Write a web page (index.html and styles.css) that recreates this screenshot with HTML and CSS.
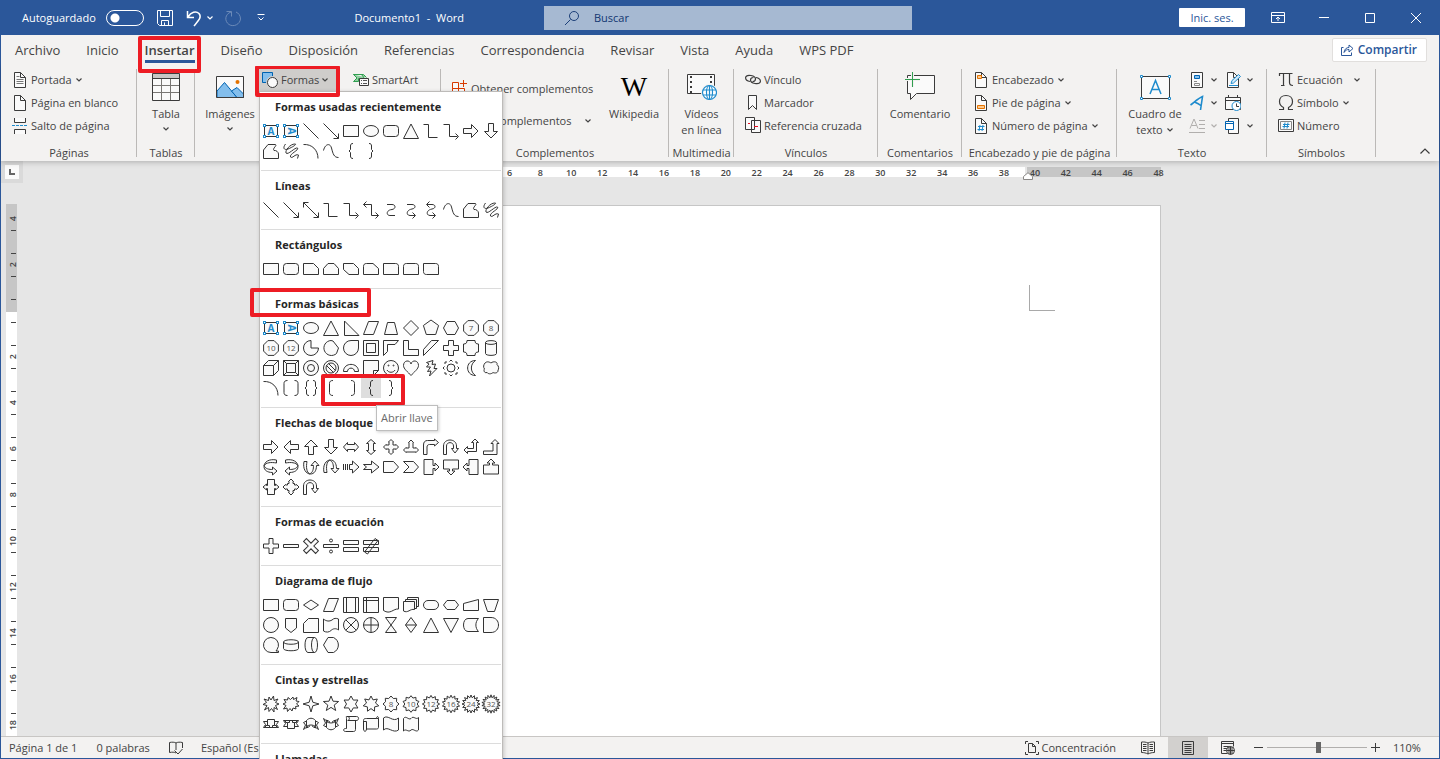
FILE: index.html
```html
<!DOCTYPE html>
<html lang="es">
<head>
<meta charset="utf-8">
<title>Documento1 - Word</title>
<meta name="viewport" content="width=device-width, initial-scale=1">
<link rel="stylesheet" href="styles.css">
</head>
<body>
<svg class="defs" aria-hidden="true">
  <symbol id="chev" viewBox="0 0 8 8"><path d="M1.500 2.500L4 5L6.500 2.500" fill="none" stroke="currentColor" stroke-width="1.200"/></symbol>
  <symbol id="page" viewBox="0 0 16 18"><path d="M2.500 1.500h6l5 5v10h-11z" fill="#fafafa" stroke="#3b3b3b"/><path d="M8.500 1.500v5h5" fill="none" stroke="#3b3b3b"/></symbol>
</svg>
<div class="app">
  <header class="titlebar">
    <div class="title-left">
      <label class="autosave">Autoguardado <input type="checkbox" class="switch"></label>
      <button class="tb save" aria-label="Guardar"><svg width="18" height="18" viewBox="0 0 18 18"><path d="M1.500 1.500h15v15h-13l-2-2zM4.500 1.500v6h9v-6M5.500 16.500v-5h7v5M8.500 16.500v-3" /></svg></button>
      <button class="tb undo" aria-label="Deshacer"><svg width="16" height="18" viewBox="0 0 16 18"><path d="M1.500 2v6.500h6.500M2 8C5 3 10 1.500 13 4.500C16 8 13 11 8 17"/></svg></button>
      <button class="tb undo-more" aria-label="Más opciones"><svg width="8" height="8"><use href="#chev"/></svg></button>
      <button class="tb redo" aria-label="Rehacer" disabled><svg width="18" height="18" viewBox="0 0 18 18"><path d="M2.500 2.500H7.500V7.500M7 3C1 5 0 12 5 15.500C10 18.500 16 15 16.500 10C16.500 6.500 14.500 4 12 3"/></svg></button>
      <button class="tb custom" aria-label="Personalizar"><svg width="10" height="10" viewBox="0 0 10 10"><path d="M1.500 1.500h7M2.500 4.500L5 7L7.500 4.500"/></svg></button>
      <span class="doc-title">Documento1&nbsp; -&nbsp; Word</span>
    </div>
    <label class="search">
      <svg width="16" height="16" viewBox="0 0 16 16" aria-hidden="true"><circle cx="10" cy="6" r="4.500"/><path d="M6.500 9.500L1 15"/></svg>
      <input type="text" placeholder="Buscar" aria-label="Buscar">
    </label>
    <div class="title-right">
      <button class="signin">Inic. ses.</button>
      <button class="win" aria-label="Opciones de cinta"><svg width="14" height="12" viewBox="0 0 14 12"><path d="M.5 .5h13v10h-13zM.5 3.500h13M7 9V5M5 7l2-2 2 2"/></svg></button>
      <button class="win" aria-label="Minimizar"><svg width="12" height="12" viewBox="0 0 12 12"><path d="M1 5.500h10"/></svg></button>
      <button class="win" aria-label="Maximizar"><svg width="12" height="12" viewBox="0 0 12 12"><path d="M1.500 1.500h9v9h-9z"/></svg></button>
      <button class="win" aria-label="Cerrar"><svg width="12" height="12" viewBox="0 0 12 12"><path d="M1 1l10 10M11 1L1 11"/></svg></button>
    </div>
  </header>

  <nav class="tabs">
    <a href="#">Archivo</a>
    <a href="#">Inicio</a>
    <a href="#" class="active" aria-current="page">Insertar<span class="mark mark-tab"></span></a>
    <a href="#">Diseño</a>
    <a href="#">Disposición</a>
    <a href="#">Referencias</a>
    <a href="#">Correspondencia</a>
    <a href="#">Revisar</a>
    <a href="#">Vista</a>
    <a href="#">Ayuda</a>
    <a href="#">WPS PDF</a>
    <button class="share"><svg width="14" height="14" viewBox="0 0 14 14" aria-hidden="true"><path d="M3.500 4.500h-2v8h10v-3M4 9.500C4.500 6 6.500 4.500 9 4.500V2L13 5.500L9 9V6.500C7 6.500 5.500 7 4 9.500z"/></svg>Compartir</button>
  </nav>

  <div class="ribbon">
    <section class="group g-pages">
      <div class="body">
        <div class="stack">
          <button class="cmd"><svg width="16" height="18" viewBox="0 0 16 18"><use href="#page"/><path d="M4.500 5.500h3M4.500 8.500h7M4.500 10.500h7M4.500 12.500h7" stroke="#777"/></svg>Portada<svg class="chev"><use href="#chev"/></svg></button>
          <button class="cmd"><svg width="16" height="18"><use href="#page"/></svg>Página en blanco</button>
          <button class="cmd"><svg width="16" height="18" viewBox="0 0 16 18"><path d="M2.500 1v4.500h11V1M2.500 17v-4.500h11V17" fill="#fafafa" stroke="#3b3b3b"/><path d="M0 8.500h16" stroke="#1e8bcd" stroke-dasharray="3 1"/></svg>Salto de página</button>
        </div>
      </div>
      <h2>Páginas</h2>
    </section>

    <section class="group g-tables">
      <div class="body">
        <button class="big"><span class="ico"><svg width="28" height="30" viewBox="0 0 28 30"><path d="M.5 1.500h27v27H.5z" fill="#fafafa" stroke="#3b3b3b"/><path d="M1 2h26v4H1z" fill="#c8c6c4"/><path d="M.5 6.500h27" stroke="#3b3b3b"/><path d="M1 13.500h26M1 20.500h26M9.500 7v21M18.500 7v21" stroke="#797774"/></svg></span>Tabla<svg class="chev"><use href="#chev"/></svg></button>
      </div>
      <h2>Tablas</h2>
    </section>

    <section class="group g-illus">
      <div class="body">
        <button class="big"><span class="ico"><svg width="28" height="22" viewBox="0 0 28 22"><path d="M.5 .5h27v21H.5z" fill="#fafafa"/><path d="M1 15L8.500 6.500L21 21.500H1z" fill="#83beec" stroke="#0063b1"/><path d="M15.500 15L21 11.500L27.500 18v3.500H21z" fill="#83beec" stroke="#0063b1"/><circle cx="21.500" cy="6" r="2" fill="#e57300"/><path d="M.5 .5h27v21H.5z" fill="none" stroke="#3b3b3b"/></svg></span>Imágenes<svg class="chev"><use href="#chev"/></svg></button>
        <div class="shapes-wrap">
          <button class="cmd shapes-btn" aria-expanded="true"><svg width="18" height="18" viewBox="0 0 18 18"><path d="M1.500 1.500h10v10h-10z" fill="#83beec" stroke="#0063b1"/><circle cx="11.500" cy="11.500" r="6.500" fill="#cfcdcb"/><circle cx="11.500" cy="11.500" r="5" fill="#fafafa" stroke="#3b3b3b"/></svg>Formas<svg class="chev"><use href="#chev"/></svg></button>
          <span class="mark mark-shapes"></span>
          <div class="menu">
            <section><h3>Formas usadas recientemente</h3><div class="gallery" data-shapes="textbox vtextbox line arrow rect oval round triangle elbow elbowArrow right down freeform scribble arc curve lbrace rbrace"></div></section>
            <section><h3>Líneas</h3><div class="gallery" data-shapes="line arrow arrow2 elbow elbowArrow elbowArrow2 curved curvedArrow curvedArrow2 curve freeform scribble"></div></section>
            <section><h3>Rectángulos</h3><div class="gallery" data-shapes="rect round snip1 snip2 snipDiag snipRound round1 round2 roundDiag"></div></section>
            <section><h3>Formas básicas<span class="mark mark-basic"></span></h3><div class="gallery" data-shapes="textbox vtextbox oval triangle rtriangle parallel trapezoid diamond pentagon hexagon n7 n8 n10 n12 pie chord tear frame halfFrame lshape stripe plus plaque can cube bevel donut no blockArc fold smile heart bolt sun moon cloud arc brackets braces lbracket rbracket lbrace:on rbrace"></div><span class="mark mark-braces"></span></section>
            <section><h3>Flechas de bloque</h3><div class="gallery" data-shapes="right left up down leftright updown quad tri bent uturn leftup bentup curveR curveL curveU curveD striped notched penta chevron callR callD callL callU callLR callQ circular"></div></section>
            <section><h3>Formas de ecuación</h3><div class="gallery" data-shapes="mplus minus times divide equal notequal"></div></section>
            <section><h3>Diagrama de flujo</h3><div class="gallery" data-shapes="rect round fdecision parallel predef internal document multidoc terminator prep manual manualop circle offpage card tape sumj orj collate sort triangle merge stored delay seq disk direct display"></div></section>
            <section><h3>Cintas y estrellas</h3><div class="gallery" data-shapes="exp1 exp2 s4 s5 s6 s7 s8 s10 s12 s16 s24 s32 ribbonU ribbonD ribbonCU ribbonCD scrollV scrollH wave dwave"></div></section>
            <section><h3>Llamadas</h3></section>
            <span class="tip" role="tooltip">Abrir llave</span>
          </div>
        </div>
        <button class="cmd smartart"><svg width="16" height="18" viewBox="0 0 16 18"><path d="M.5 3.500h10l3 3M.5 3.500l3.500 3.500-3.500 3.500h5v-3h6l-3-4z" fill="#8fd1a0" stroke="#2f9e4f"/><path d="M6.500 7.500h9v7h-9z" fill="#fafafa" stroke="#3b3b3b"/><path d="M8 9.500h1M8 12.500h1M10 9.500h4M10 12.500h4" stroke="#555"/></svg>SmartArt</button>
      </div>
    </section>

    <section class="group g-addins">
      <div class="body">
        <div class="addins">
          <button class="cmd"><svg width="16" height="18" viewBox="0 0 16 18"><path d="M.5 2.500h6v6h-6zM.5 8.500h6v6h-6zM6.500 8.500h6v6h-6z" fill="#fafafa" stroke="#d83b01"/><path d="M11.500 0v7M8 3.500h7" stroke="#d83b01"/></svg>Obtener complementos</button>
          <button class="cmd mine"><svg width="16" height="18" viewBox="0 0 16 18"><path d="M2.500 5.500l6-3 6 3v7l-6 3-6-3z" fill="#fafafa" stroke="#d83b01"/></svg>Mis complementos<svg class="chev wide"><use href="#chev"/></svg></button>
        </div>
        <button class="big"><span class="ico wiki">W</span>Wikipedia</button>
      </div>
      <h2>Complementos</h2>
    </section>

    <section class="group g-media">
      <div class="body">
        <button class="big"><span class="ico"><svg width="30" height="28" viewBox="0 0 30 28"><path d="M.5 1.500h27v19H.5z" fill="#fafafa" stroke="#3b3b3b"/><path d="M4 3v17M24 3v8" stroke="#3b3b3b" stroke-width="2" stroke-dasharray="2 3"/><circle cx="22.500" cy="19.500" r="8.500" fill="#f3f2f1"/><g fill="#fff" stroke="#1e8bcd" stroke-width="1.200"><circle cx="22.500" cy="19.500" r="7"/><ellipse cx="22.500" cy="19.500" rx="3" ry="7"/><path d="M16 17h13M16 22h13M22.500 12.500v14" fill="none"/></g></svg></span>Vídeos<br>en línea</button>
      </div>
      <h2>Multimedia</h2>
    </section>

    <section class="group g-links">
      <div class="body">
        <div class="stack">
          <button class="cmd"><svg width="16" height="18" viewBox="0 0 16 18"><g fill="none" stroke="#3b3b3b" stroke-width="1.200"><path d="M5 10.500C2 10 .5 8.500 .6 6.500C1 4.500 3 4 6 4.500C9 5 10.500 6.500 10.500 8C10.500 10 9 10.500 7.500 10.500"/><path d="M11 6.500C14 7 15.500 8.500 15.400 10.500C15 12.500 13 13 10 12.500C7 12 5.500 10.500 5.500 9C5.500 7 7 6.500 8.500 6.500"/></g></svg>Vínculo</button>
          <button class="cmd"><svg width="16" height="18" viewBox="0 0 16 18"><path d="M3.500 1.500h8v14l-4-4-4 4z" fill="#fafafa" stroke="#3b3b3b"/></svg>Marcador</button>
          <button class="cmd"><svg width="16" height="18" viewBox="0 0 16 18"><path d="M.5 .5h9v12h-9zM6.500 3.500h9v12h-9z" fill="#fafafa" stroke="#3b3b3b"/><path d="M3 6.500h2M9 9.500h4" stroke="#e81123"/></svg>Referencia cruzada</button>
        </div>
      </div>
      <h2>Vínculos</h2>
    </section>

    <section class="group g-comments">
      <div class="body">
        <button class="big"><span class="ico"><svg width="32" height="32" viewBox="0 0 32 32"><path d="M3.500 4.500h27v18h-18l-6 6v-6h-3z" fill="#fafafa" stroke="#3b3b3b"/><path d="M8.500 1v15M1 8.500h15" stroke="#f3f2f1" stroke-width="3"/><path d="M8.500 1v15M1 8.500h15" stroke="#2f9e4f"/></svg></span>Comentario</button>
      </div>
      <h2>Comentarios</h2>
    </section>

    <section class="group g-header">
      <div class="body">
        <div class="stack">
          <button class="cmd"><svg width="16" height="18" viewBox="0 0 16 18"><use href="#page"/><path d="M4.500 4.500h4v3h-4z" fill="#fcc98c" stroke="#e57300"/></svg>Encabezado<svg class="chev"><use href="#chev"/></svg></button>
          <button class="cmd"><svg width="16" height="18" viewBox="0 0 16 18"><use href="#page"/><path d="M4.500 11.500h7v3h-7z" fill="#fcc98c" stroke="#e57300"/></svg>Pie de página<svg class="chev"><use href="#chev"/></svg></button>
          <button class="cmd"><svg width="16" height="18" viewBox="0 0 16 18"><use href="#page"/><path d="M7 8l-1 6M10 8l-1 6M5 9.500h6.500M4.500 12.500h6.500" stroke="#1e8bcd"/></svg>Número de página<svg class="chev"><use href="#chev"/></svg></button>
        </div>
      </div>
      <h2>Encabezado y pie de página</h2>
    </section>

    <section class="group g-text">
      <div class="body">
        <button class="big"><span class="ico"><svg width="32" height="28" viewBox="0 0 32 28"><path d="M2.500 3.500h28v22h-28z" fill="#fafafa" stroke="#3b3b3b"/><path d="M1.500 2.500h2v2h-2zM29.500 2.500h2v2h-2zM1.500 24.500h2v2h-2zM29.500 24.500h2v2h-2z" fill="#fff" stroke="#1e8bcd"/><path d="M11 21L16.500 7.500L22 21M13 16.500h7" fill="none" stroke="#1e8bcd" stroke-width="1.500"/></svg></span>Cuadro de<span>texto<svg class="chev inline"><use href="#chev"/></svg></span></button>
        <div class="mini-grid">
          <button class="mini" aria-label="Elementos rápidos"><svg width="16" height="18" viewBox="0 0 16 18"><path d="M2.500 1.500h11v15h-11z" fill="#fafafa" stroke="#3b3b3b"/><path d="M5.500 4.500h5v3h-5z" fill="#83beec" stroke="#0063b1"/><path d="M5 10.500h3M5.500 12.500h5v2h-5z" fill="none" stroke="#888"/></svg><svg class="chev"><use href="#chev"/></svg></button>
          <button class="mini" aria-label="Línea de firma"><svg width="16" height="18" viewBox="0 0 16 18"><use href="#page"/><path d="M4 14.500h9" stroke="#1e8bcd"/><path d="M6 12.500l1-3 6.500-6 2 2-7 6.500z" fill="#d3e9f8" stroke="#1e8bcd"/></svg><svg class="chev"><use href="#chev"/></svg></button>
          <button class="mini" aria-label="WordArt"><svg width="16" height="18" viewBox="0 0 16 18"><path d="M1.500 11C5 8.500 9 4.500 13.500 2.500L11.500 16M5.500 8C8 9 10 10 12.500 12" fill="none" stroke="#1e8bcd" stroke-width="1.600"/></svg><svg class="chev"><use href="#chev"/></svg></button>
          <button class="mini" aria-label="Fecha y hora"><svg width="16" height="18" viewBox="0 0 16 18"><path d="M.5 3.500h15v12H.5zM.5 6.500h15M3.500 1v3M12.500 1v3" fill="#fafafa" stroke="#3b3b3b"/><circle cx="11.500" cy="12" r="4.500" fill="#fff" stroke="#1e8bcd"/><path d="M11.500 9.500v3h2.500" fill="none" stroke="#3b3b3b"/></svg></button>
          <button class="mini off" aria-label="Letra capital" disabled><svg width="16" height="18" viewBox="0 0 16 18"><path d="M1 11.500L5 2l4 9.500M2.500 8.500h5M10 3.500h6M10 7.500h6M10 11.500h6M0 15.500h16" fill="none" stroke="#b1afad" stroke-width="1"/></svg><svg class="chev"><use href="#chev"/></svg></button>
          <button class="mini" aria-label="Objeto"><svg width="16" height="18" viewBox="0 0 16 18"><path d="M3.500 1.500h10v15h-10z" fill="#fafafa" stroke="#3b3b3b"/><path d="M.5 4.500h8v8h-8zM.5 6.500h8" fill="#fff" stroke="#0063b1"/></svg><svg class="chev"><use href="#chev"/></svg></button>
        </div>
      </div>
      <h2>Texto</h2>
    </section>

    <section class="group g-symbols">
      <div class="body">
        <div class="stack">
          <button class="cmd"><svg width="16" height="18" viewBox="0 0 16 18"><path d="M1.500 5V2.500h13M5.500 2.500v12M3 14.500h3.500M11.500 2.500v9c0 2 1 3 3.500 3" fill="none" stroke="#3b3b3b" stroke-width="1.200"/></svg>Ecuación<svg class="chev wide"><use href="#chev"/></svg></button>
          <button class="cmd"><svg width="16" height="18" viewBox="0 0 16 18"><path d="M1 15.500h4.500v-2C2.500 12 1.500 9.500 1.500 7.500C1.500 4 4 1.500 8 1.500S14.500 4 14.500 7.500C14.500 9.500 13.500 12 10.500 13.500v2H15" fill="none" stroke="#3b3b3b" stroke-width="1.200"/></svg>Símbolo<svg class="chev"><use href="#chev"/></svg></button>
          <button class="cmd"><svg width="16" height="18" viewBox="0 0 16 18"><path d="M.5 2.500h15v12H.5z" fill="#fafafa" stroke="#3b3b3b"/><path d="M2.500 4.500h11v8h-11z" fill="none" stroke="#888"/><path d="M7 5.500l-1 6M10 5.500l-1 6M5 7.500h6.500M4.500 9.500h6.500" stroke="#1e8bcd"/></svg>Número</button>
        </div>
      </div>
      <h2>Símbolos</h2>
    </section>
    <button class="collapse" aria-label="Contraer la cinta"><svg width="12" height="8" viewBox="0 0 12 8"><path d="M1.500 6.500L6 2l4.500 4.500" fill="none" stroke="#3b3b3b" stroke-width="1.200"/></svg></button>
  </div>

  <main class="workspace">
    <button class="tabstop" aria-label="Tabulación izquierda"><svg width="6" height="6" viewBox="0 0 6 6"><path d="M1 0v5h5" fill="none" stroke="#666" stroke-width="2"/></svg></button>
    <div class="hruler">
      <div class="hbar">
        <span class="h-active"></span><span class="h-margin"></span>
        <div class="hnums"></div>
        <svg class="indent" width="10" height="8" viewBox="0 0 10 8"><path d="M.5 7.500v-3L5 .7l4.500 3.800v3z" fill="#fff" stroke="#8a8886"/></svg>
      </div>
    </div>
    <div class="vruler"></div>
    <div class="canvas"><article class="sheet"><div class="corner"></div></article></div>
  </main>

  <footer class="status">
    <span>Página 1 de 1</span>
    <span>0 palabras</span>
    <button class="st" aria-label="Revisión"><svg width="14" height="14" viewBox="0 0 14 14"><path d="M7 12C5.500 11 3 11 .5 11.500v-10C3 1 5.500 1 7 2C8.500 1 11 1 13.500 1.500V7M7 2v7M5.500 9.500l3.500 3.500 4.500-5" fill="none" stroke="#3b3b3b"/></svg></button>
    <span>Español (España)</span>
    <button class="st focus"><svg width="14" height="14" viewBox="0 0 14 14"><path d="M.5 3V.5H3M11 .5h2.500V3M.5 11v2.500H3M11 13.500h2.500V11M3.500 2.500h4l3 3v6h-7zM7.500 2.500v3h3" fill="none" stroke="#3b3b3b"/></svg>Concentración</button>
    <button class="st view" aria-label="Modo de lectura"><svg width="14" height="14" viewBox="0 0 14 14"><path d="M7 13V2C5 1 3 .9 .5 1v10.500C3 11.500 5 12 7 13C9 12 11 11.500 13.500 11.500V1C11 .9 9 1 7 2M2 3.500h3.500M2 5.500h3.500M2 7.500h3.500M2 9.500h3.500M8.500 3.500H12M8.500 5.500H12M8.500 7.500H12M8.500 9.500H12" fill="none" stroke="#3b3b3b"/></svg></button>
    <button class="st view on" aria-label="Diseño de impresión"><svg width="12" height="14" viewBox="0 0 12 14"><path d="M.5 .5h11v13H.5zM2.500 3.500h7M2.500 5.500h7M2.500 7.500h7M2.500 9.500h7M2.500 11.500h7" fill="none" stroke="#3b3b3b"/></svg></button>
    <button class="st view" aria-label="Diseño web"><svg width="14" height="14" viewBox="0 0 14 14"><path d="M6 12.500H.5v-12h12v5M.5 2.500h12M2.500 5.500h7M2.500 7.500h4M2.500 9.500h3" fill="none" stroke="#3b3b3b"/><circle cx="9.500" cy="9.500" r="4" fill="#f3f2f1" stroke="#3b3b3b"/><path d="M5.500 9.500h8M9.500 5.500v8M8 6v7M11 6v7" stroke="#3b3b3b" fill="none"/></svg></button>
    <button class="st zoomer out" aria-label="Alejar"><svg width="9" height="9" viewBox="0 0 9 9"><path d="M0 4.500h9" stroke="#3b3b3b"/></svg></button>
    <input class="zoom" type="range" min="0" max="100" value="52" aria-label="Zoom">
    <button class="st zoomer" aria-label="Acercar"><svg width="9" height="9" viewBox="0 0 9 9"><path d="M0 4.500h9M4.500 0v9" stroke="#3b3b3b"/></svg></button>
    <span class="percent">110%</span>
  </footer>
</div>
<script src="shapes.js"></script>
</body>
</html>
```

FILE: styles.css
```css
:root {
  --blue: #2b579a;
  --ink: #444;
  --line: #333;
  --ribbon: #f3f2f1;
}
* { box-sizing: border-box; }
body {
  margin: 0;
  font: 11px/16px "Open Sans", "Noto Sans", sans-serif;
  color: var(--ink);
}
button {
  font: inherit;
  color: inherit;
  background: none;
  border: 0;
  padding: 0;
  margin: 0;
}
a { color: inherit; text-decoration: none; }
h2, h3 { margin: 0; font: inherit; }
.defs { position: absolute; width: 0; height: 0; }
.app {
  display: flex;
  flex-direction: column;
  height: 100vh;
  padding: 0 1px 1px;
  background: var(--blue);
  overflow: hidden;
}

/* Title bar */
.titlebar {
  display: grid;
  grid-template-columns: 543fr 368px 527fr;
  align-items: center;
  height: 35px;
  flex: none;
  color: #fff;
}
.title-left, .title-right { display: flex; align-items: center; }
.title-left { padding-left: 21px; }
.autosave { display: flex; align-items: center; gap: 10px; }
.switch {
  appearance: none;
  width: 38px;
  height: 16px;
  margin: 0;
  border: 1px solid #fff;
  border-radius: 8px;
  background: radial-gradient(circle at 8px 7px, #fff 4px, transparent 5px);
}
.tb { display: flex; }
.tb svg, .win svg { fill: none; stroke: currentColor; }
.save { margin-left: 12px; }
.undo { margin-left: 12px; }
.undo svg { stroke-width: 1.500; }
.undo-more { margin-left: 4px; }
.redo { margin-left: 10px; opacity: 0.3; }
.custom { margin-left: 14px; }
.doc-title { margin-left: auto; margin-right: 80px; }
.search {
  display: flex;
  align-items: center;
  height: 24px;
  padding-left: 20px;
  gap: 14px;
  background: #a6b9d2;
}
.search svg { fill: none; stroke: #1c3f78; }
.search input {
  flex: 1;
  min-width: 0;
  border: 0;
  padding: 0;
  background: none;
  font: inherit;
}
.search input::placeholder { color: #123670; opacity: 1; }
.title-right { justify-content: flex-end; }
.signin {
  width: 66px;
  height: 19px;
  margin-right: 10px;
  border-radius: 1px;
  background: #fff;
  color: var(--blue);
  line-height: 19px;
}
.win { display: grid; place-items: center; width: 46px; height: 34px; }

/* Tabs */
.tabs {
  position: relative;
  z-index: 3;
  display: flex;
  flex: none;
  height: 31px;
  padding: 0 12px 0 14px;
  gap: 26px;
  background: var(--ribbon);
  font-size: 13px;
  line-height: 31px;
}
.tabs a { position: relative; }
.tabs .active { font-weight: 600; }
.tabs .active::before {
  content: "";
  position: absolute;
  left: 0;
  right: 0;
  bottom: 3px;
  height: 3px;
  background: var(--blue);
}
.share {
  display: flex;
  align-items: center;
  gap: 4px;
  height: 24px;
  margin: 3px 0 0 auto;
  padding: 0 9px 0 7px;
  border: 1px solid #e1dfdd;
  border-radius: 2px;
  background: #fff;
  color: var(--blue);
  font-weight: 600;
  font-size: 12px;
  line-height: 22px;
}
.share svg { fill: none; stroke: currentColor; }

/* Red callout frames */
.mark {
  position: absolute;
  z-index: 20;
  border: 4px solid #ed1c24;
  border-radius: 2px;
  pointer-events: none;
}
.mark-tab { inset: 1px -6px -7px -7px; }
.mark-shapes { inset: -3px -3px -6px -3px; }
.mark-basic { left: -25px; top: -1px; width: 121px; height: 29px; }
.mark-braces { left: 60px; top: 85px; width: 84px; height: 32px; }

/* Ribbon */
.ribbon {
  position: relative;
  z-index: 2;
  display: flex;
  flex: none;
  height: 95px;
  padding-top: 2px;
  background: var(--ribbon);
  box-shadow: 0 1px 6px rgba(0, 0, 0, 0.25);
}
.group {
  position: relative;
  display: flex;
  flex-direction: column;
  flex: none;
}
.group::after {
  content: "";
  position: absolute;
  right: 0;
  top: 1px;
  bottom: 4px;
  width: 1px;
  background: #bbb9b7;
}
.group h2 { text-align: center; white-space: nowrap; height: 16px; }
.body { display: flex; flex: 1; align-items: flex-start; }
.stack { display: flex; flex-direction: column; }
.cmd {
  display: flex;
  align-items: center;
  height: 23px;
  gap: 3px;
  white-space: nowrap;
}
.chev { width: 8px; height: 8px; flex: none; }
.chev.wide { margin-left: 7px; }
.chev.inline { margin-left: 3px; }
.big {
  display: flex;
  flex-direction: column;
  align-items: center;
  line-height: 16px;
  white-space: nowrap;
}
.big > .chev { margin-top: 3px; }
.ico { display: grid; place-items: center; height: 38px; }
.wiki { font: 28px/28px "Liberation Serif", serif; color: #000; }

.g-pages { width: 136px; }
.g-pages .body { padding-left: 11px; }
.g-tables { width: 58px; }
.g-tables .body, .g-media .body, .g-comments .body { justify-content: center; }
.g-illus { width: 246px; }
.g-illus .big { width: 56px; margin-left: 7px; }
.g-addins { width: 228px; }
.g-media { width: 65px; }
.g-links { width: 144px; }
.g-links .body { padding-left: 11px; }
.g-comments { width: 84px; }
.g-header { width: 155px; }
.g-header .body { padding-left: 11px; }
.g-text { width: 150px; }
.g-symbols { width: 109px; }
.g-symbols .body { padding-left: 11px; }

.smartart { margin-left: 16px; }
.addins { display: flex; flex-direction: column; gap: 9px; padding: 9px 0 0 11px; }
.mine { gap: 6px; }
.g-addins .big { margin: 0 10px 0 auto; }
.g-text .big { width: 68px; margin-left: 4px; }
.mini-grid { display: grid; grid-template-columns: 36px auto; }
.mini { display: flex; align-items: center; gap: 5px; height: 23px; }
.mini.off { color: #b1afad; }
.collapse { margin: auto 8px 2px auto; }

.shapes-wrap { position: relative; }
.shapes-btn {
  width: 79px;
  padding-left: 3px;
  gap: 2px;
  background: #cfcdcb;
}

/* Shapes menu */
.menu {
  position: absolute;
  z-index: 10;
  left: 1px;
  top: 23px;
  width: 244px;
  padding: 0 1px;
  border: 1px solid #bdbbb9;
  background: #fff;
  box-shadow: 1px 1px 4px rgba(0, 0, 0, 0.2);
}
.menu section { position: relative; padding-bottom: 9px; }
.menu section + section { border-top: 1px solid #dcdcdc; }
.menu h3 {
  position: relative;
  height: 29px;
  padding-left: 14px;
  font-size: 11px;
  font-weight: 700;
  line-height: 29px;
  color: #262626;
}
.menu h3 .mark { left: -11px; }
.gallery { display: grid; grid-template-columns: repeat(12, 20px); }
.shape { display: block; width: 20px; height: 20px; }
.shape.on { background: #dedede; }
.shape svg { display: block; fill: #fafafa; stroke: var(--line); }
.shape .open { fill: none; }
.shape .num { fill: #555; stroke: none; font-size: 8px; text-anchor: middle; }
.shape .letter { fill: #1e8bcd; stroke: none; font-size: 10px; font-weight: 700; text-anchor: middle; }
.shape .grip { fill: #fff; stroke: #1e8bcd; }
.tip {
  position: absolute;
  z-index: 30;
  left: 116px;
  top: 313px;
  height: 26px;
  padding: 0 4px;
  border: 1px solid #bebebe;
  background: #fff;
  color: #6a6a6a;
  line-height: 24px;
  white-space: nowrap;
  box-shadow: 1px 1px 3px rgba(0, 0, 0, 0.2);
}

/* Document area */
.workspace {
  display: grid;
  grid-template-columns: 22px 1fr 22px;
  grid-template-rows: 22px 1fr;
  flex: 1;
  min-height: 0;
  background: #e6e6e6;
  overflow: hidden;
}
.tabstop {
  display: grid;
  place-items: center;
  background: #fbfbfb;
  border: 4px solid #dadada;
}
.hruler { grid-column: 2; display: flex; justify-content: center; padding-top: 6px; }
.hbar { position: relative; display: flex; gap: 2px; width: 882px; height: 10px; }
.h-active { flex: 1; background: #fff; }
.h-margin { width: 134px; background: #c6c6c6; }
.hnums {
  position: absolute;
  right: -13px;
  top: 0;
  width: 680px;
  display: grid;
  grid-template-columns: repeat(22, 1fr);
  font-size: 9px;
  font-weight: 600;
  line-height: 11px;
  text-align: center;
}
.indent { position: absolute; right: 128px; top: 5px; }
.vruler {
  grid-row: 2;
  width: 11px;
  margin: 21px 0 0 5px;
  background: linear-gradient(#c6c6c6 108px, #fff 108px);
  font-size: 9px;
  font-weight: 600;
}
.vnum {
  position: relative;
  display: grid;
  place-items: center;
  height: 46px;
  line-height: 13px;
}
.vnum:first-child { height: 38px; padding-bottom: 8px; }
.vnum::before, .vnum::after {
  content: "";
  position: absolute;
  left: 5px;
  width: 5px;
  height: 1px;
  background: var(--ink);
}
.vnum::before { top: 11px; }
.vnum::after { bottom: 11px; }
.vnum:first-child::before { display: none; }
.vnum span { writing-mode: vertical-rl; transform: rotate(180deg); }
.canvas { grid-column: 2; grid-row: 2; display: flex; justify-content: center; padding-top: 22px; min-height: 0; }
.sheet {
  width: 882px;
  padding: 79px 105px 0 0;
  border: 1px solid #c6c6c6;
  border-bottom: 0;
  background: #fff;
}
.corner {
  width: 26px;
  height: 26px;
  margin-left: auto;
  border: solid #a9a9a9;
  border-width: 0 0 1px 1px;
}

/* Status bar */
.status {
  display: flex;
  align-items: center;
  flex: none;
  height: 22px;
  padding: 0 19px 0 8px;
  border-top: 1px solid #c8c6c4;
  background: var(--ribbon);
}
.status > span { margin-right: 19px; white-space: nowrap; }
.st { display: flex; align-items: center; justify-content: center; height: 21px; gap: 3px; }
.status .st:not(.view):not(.zoomer):not(.focus) { margin-right: 18px; }
.focus { margin: 0 12px 0 auto; }
.view { width: 40px; }
.view.on { background: #d2d0ce; }
.zoomer { width: 9px; }
.zoomer.out { margin-left: 6px; }
.zoom {
  appearance: none;
  width: 100px;
  height: 21px;
  margin: 0 4px;
  background: linear-gradient(#b1afad, #b1afad) center / 100% 1px no-repeat;
}
.zoom::-webkit-slider-thumb { appearance: none; width: 5px; height: 11px; background: #666; }
.status > .percent { width: 27px; margin: 0 0 0 13px; }
```

FILE: shapes.js
```js
// Every shape is drawn in a 20 x 20 cell.
const p = (d) => `<path d="${d}"/>`;
const o = (d) => `<path class="open" d="${d}"/>`;
const num = (n) => `<text class="num" x="10" y="13">${n}</text>`;
const ring = (points) => p("M" + points.map(([x, y]) => `${x.toFixed(1)} ${y.toFixed(1)}`).join("L") + "Z");

function polygon(n, r, turn = 0) {
  return ring(Array.from({ length: n }, (_, i) => {
    const a = (i / n) * 2 * Math.PI - Math.PI / 2 + turn;
    return [10 + r * Math.cos(a), 10 + r * Math.sin(a)];
  }));
}
function star(n, outer, inner) {
  return ring(Array.from({ length: n * 2 }, (_, i) => {
    const a = (i / n) * Math.PI - Math.PI / 2;
    const r = i % 2 ? inner : outer;
    return [10 + r * Math.cos(a), 10 + r * Math.sin(a)];
  }));
}
const turn = (deg, s) => `<g transform="rotate(${deg} 10 10)">${s}</g>`;
const flip = (s) => `<g transform="matrix(1 0 0 -1 0 20)">${s}</g>`;
const circle = (r) => `<circle cx="10" cy="10" r="${r}"/>`;
const grips = [[3.5, 4.5], [16.5, 4.5], [3.5, 15.5], [16.5, 15.5]]
  .map(([x, y]) => `<rect class="grip" x="${x - 1}" y="${y - 1}" width="2" height="2"/>`).join("");
const letter = '<text class="letter" x="10" y="13.500">A</text>';
const box = p("M3.500 4.500h13v11h-13z");

const right = p("M2.500 7.500h8V3.500L17 10l-6.500 6.500v-4h-8z");
const oct = polygon(8, 8, Math.PI / 8);
const dbl = p("M6.500 5.500L2.500 10l4 4.500v-2h7v2l4-4.500-4-4.500v2h-7z");
const curvedArrow = p("M15.500 3C8 1.500 3 5 3 9.500C3 13 6 15.500 11.500 15.500V18l4.500-4-4.500-4v2.500C8.500 12.500 4 12 3.200 8.500C5 5.500 10 5 15.500 6z");
const callR = p("M3 2.500h9v6h2v-2.500l4 4-4 4v-2.500h-2v6H3z");
const freeform = "M2.500 9L7 3.500h7.500C16.500 4.500 11 7.500 13 9.500C15 9 17.500 11 17.500 13v4.500h-15z";
const lbrace = o("M12 2.500C10 2.500 9.500 3.500 9.500 5v3.500L8 10l1.500 1.500V15c0 1.500.5 2.500 2.500 2.500");
const uturn = p("M2.500 17.500V9C2.500 1 15.500 1 15.500 9v2.500h2l-3.500 4.500-3.500-4.500h2V9C12.500 4.500 5.500 4.500 5.500 9v8.500z");
const tear = "M17.500 2.500V10A7.500 7.500 0 1 1 10 2.500z";
const banner = p("M2.500 7.500h4v6h-4l2-3zM17.500 7.500h-4v6h4l-2-3z") + p("M6.500 5.500h7v6h2v2h-11v-2h2z") + o("M6.500 11.500h2v2M13.500 11.500h-2v2");
const wavy = p("M2.500 8.500l4-2v6l-4 3L4.500 11zM17.500 8.500l-4-2v6l4 3L15.500 11z") + p("M5.500 6.500C8 3.500 12 3.500 14.500 6.500v6C12 10.500 8 10.500 5.500 12.500z") + o("M5.500 12.500v1.500l3-1.500v-1M14.500 12.500v1.500l-3-1.500v-1");

const shapes = {
  textbox: box + grips + letter,
  vtextbox: box + grips + turn(90, letter),
  line: o("M2.500 2.500l15 15"),
  arrow: o("M2.500 2.500l15 15M17.500 12.500v5h-5"),
  arrow2: o("M2.500 2.500l15 15M17.500 12.500v5h-5M2.500 7.500v-5h5"),
  rect: p("M2.500 4.500h15v11h-15z"),
  oval: '<ellipse cx="10" cy="10" rx="7.500" ry="5.500"/>',
  round: '<rect x="2.500" y="4.500" width="15" height="11" rx="3"/>',
  triangle: p("M10 3l7.500 14.500h-15z"),
  elbow: o("M2.500 3.500h5v13h9"),
  elbowArrow: o("M2.500 3.500h6v12h8M14.500 12.500l3 3-3 3"),
  elbowArrow2: o("M2.500 4.500h8v11h7M14.500 12.500l3 3-3 3M5.500 1.500l-3 3 3 3"),
  right, left: turn(180, right), up: turn(-90, right), down: turn(90, right),
  freeform: p(freeform),
  scribble: o("M4.500 3C1.500 7 3 9.500 7 8C13 5.500 16 3 14 3C9 3 4 9.500 5 12C7 14.500 14 6 16.500 7C18.500 9 8 13 9.500 16C11.500 18 14 12.500 17.500 14L16.500 17.500"),
  arc: o("M2.500 3.500C11 3 17 9 17 17.500"),
  curve: o("M2.500 9.500C4 3 9 1.500 10.500 7C12 13 13 16.500 17.500 16.500"),
  lbrace, rbrace: turn(180, lbrace),
  curved: o("M6 4.500h5C15 4.500 15 9 11 9.500C5 10 5 15.500 9 15.500h5"),
  curvedArrow: o("M6 4.500h5C15 4.500 15 8.500 11 9C5 10 5 15.500 9 15.500h5M11.500 12.500l3 3-3 3"),
  curvedArrow2: o("M6 4.500h5C15 4.500 15 8.500 11 9C5 10 5 15.500 9 15.500h5M11.500 12.500l3 3-3 3M8.500 1.500l-3 3 3 3"),
  snip1: p("M2.500 4.500h10l5 5v6h-15z"),
  snip2: p("M7 4.500h6l4.500 5v6h-15v-6z"),
  snipDiag: p("M2.500 4.500h10l5 5v6H8l-5.500-5z"),
  snipRound: p("M5.500 4.500H12l5.500 5v6h-15v-8c0-2 1-3 3-3z"),
  round1: p("M2.500 4.500h12c2 0 3 1 3 3v8h-15z"),
  round2: p("M5.500 4.500h9c2 0 3 1 3 3v8h-15v-8c0-2 1-3 3-3z"),
  roundDiag: p("M2.500 4.500h12c2 0 3 1 3 3v8h-12c-2 0-3-1-3-3z"),
  rtriangle: p("M3.500 3v14.500H18z"),
  parallel: p("M7.500 3.500h10l-5 13h-10z"),
  trapezoid: p("M6.500 4.500h7l3 12h-13z"),
  diamond: p("M10 2.500l7.500 7.500-7.500 7.500L2.500 10z"),
  pentagon: polygon(5, 8),
  hexagon: p("M6 3.500h8l3.500 6.500-3.500 6.500H6L2.500 10z"),
  n7: oct + num(7), n8: oct + num(8), n10: oct + num(10), n12: oct + num(12),
  pie: p("M10 2.500A7.500 7.500 0 1 0 17.500 10H10z"),
  chord: p("M10 2.500A7.500 7.500 0 1 0 15.500 15.500L17.500 10 12 3z"),
  tear: p(tear),
  frame: p("M2.500 2.500h15v15h-15zM5.500 5.500h9v9h-9z"),
  halfFrame: p("M2.500 2.500h15l-3.500 4H6.500v7l-4 4z"),
  lshape: p("M2.500 2.500h5v9h10v6h-15z"),
  stripe: p("M10.500 2.500h7l-15 15v-6z"),
  plus: p("M7.500 2.500h5v5h5v5h-5v5h-5v-5h-5v-5h5z"),
  plaque: p("M6 2.500h8c0 2.500 1 3.500 3.500 3.500v8c-2.500 0-3.500 1-3.500 3.500H6c0-2.500-1-3.500-3.500-3.500V6C5 6 6 5 6 2.500z"),
  can: p("M4.500 4.500c0-2.500 11-2.500 11 0v11c0 2.500-11 2.500-11 0z") + o("M4.500 4.500c0 2.500 11 2.500 11 0"),
  cube: p("M2.500 7.500l5-5h10v10l-5 5h-10zM2.500 7.500h10v10M12.500 7.500l5-5"),
  bevel: p("M2.500 2.500h15v15h-15zM5.500 5.500h9v9h-9z") + o("M2.500 2.500l3 3M17.500 2.500l-3 3M2.500 17.500l3-3M17.500 17.500l-3-3"),
  donut: circle(7.5) + circle(3.5),
  no: circle(7.5) + circle(5) + o("M5.500 7.500l7 7M7.500 5.500l7 7"),
  blockArc: p("M2.500 13.500C2.500 4 17.500 4 17.500 13.500h-4C13.500 9 6.500 9 6.500 13.500z"),
  fold: p("M2.500 2.500h15v10l-5 5h-10z") + o("M12.500 17.500v-5h5"),
  smile: circle(7.5) + o("M6 12C7.500 15 12.500 15 14 12") + '<circle cx="7.500" cy="7.500" r=".5"/><circle cx="12.500" cy="7.500" r=".5"/>',
  heart: p("M10 6C11 1.500 17.500 2 17.500 7.500C17.500 11 13 14 10 17.500C7 14 2.500 11 2.500 7.500C2.500 2 9 1.500 10 6z"),
  bolt: p("M5.500 4.500L12 2.500L11 6.500L14.500 6L13 10.500L16 10.500L8.500 18L10 13L6.500 13.500L9.500 9L5.500 9L8 6z"),
  sun: circle(4) + o("M8.500 3.500L10 2l1.500 1.500M8.500 16.500L10 18l1.500-1.500M3.500 8.500L2 10l1.500 1.500M16.500 8.500L18 10l-1.500 1.500M4 6V4h2M14 4h2v2M4 14v2h2M14 16h2v-2"),
  moon: p("M14.500 2.500C4 2.500 4 17.500 14.500 17.500C9 14 9 6 14.500 2.500z"),
  cloud: p("M4 5C6 3 8.500 4 10 5C12 3 17 3.500 16 6.500C18 8 18 11.500 17 12C17.500 15 14 15.500 12 14.500C10 16.500 7 16 6 14.500C3 15.500 2.500 12 3.500 11C2 9 2.500 7 4 5z"),
  brackets: o("M6.500 2.500C4 2.500 3 3.500 3 5.500v9c0 2 1 3 3.500 3M13.500 2.500C16 2.500 17 3.500 17 5.500v9c0 2-1 3-3.500 3"),
  braces: o("M8 2.500C6 2.500 5.500 3.500 5.500 5v3.500L4 10l1.500 1.500V15c0 1.500.5 2.500 2.500 2.500M12 2.500c2 0 2.500 1 2.500 2.500v3.500L16 10l-1.500 1.500V15c0 1.500-.5 2.500-2.500 2.500"),
  lbracket: o("M12 2.500C9.500 2.500 8.500 3.500 8.500 5.500v9c0 2 1 3 3.500 3"),
  rbracket: o("M10 2.500c2.500 0 3.500 1 3.500 3v9c0 2-1 3-3.500 3"),
  leftright: dbl, updown: turn(90, dbl),
  quad: p("M10 2.500l2.500 2.500h-.5v3h3v-.5l2.500 2.500-2.500 2.500v-.5h-3v3h.5L10 17.500 7.500 15H8v-3H5v.5L2.500 10 5 7.500V8h3V5h-.5z"),
  tri: p("M10 3l2.500 2.500H12v5.500h3v-.5l2.500 2.500-2.500 2.500V15H5v.5L2.500 13 5 10.500v.5h3V5.500h-.5z"),
  bent: p("M2.500 17.500V8c0-3 1.500-4.500 4-4.500h7v-1.500l4 3.500-4 3.500V7.500h-5c-1.500 0-2.500 1-2.500 2.500v7.500z"),
  uturn, circular: uturn,
  leftup: p("M12.500 11.500v-6h-2l3.500-3.500 3.500 3.500h-2v9h-9v2L3 13l3.500-3.500v2z"),
  bentup: p("M2.500 14h9.500V6.500h-2l4-4 4 4h-2v11H2.500z"),
  curveR: curvedArrow,
  curveL: `<g transform="matrix(-1 0 0 1 20 0)">${curvedArrow}</g>`,
  curveU: turn(-90, curvedArrow),
  curveD: `<g transform="matrix(0 1 1 0 0 0)">${curvedArrow}</g>`,
  striped: p("M8.500 7.500h3V4L18 10l-6.500 6v-3.500h-3z") + o("M2.500 7v6M4.500 7v6M6.500 7v6"),
  notched: p("M2.500 7.500h8V4L18 10l-7.500 6v-3.500h-8L5.500 10z"),
  penta: p("M2.500 4.500h10l5 5.500-5 5.500h-10z"),
  chevron: p("M2.500 4.500h10l5 5.500-5 5.500h-10L8 10z"),
  callR, callD: turn(90, callR), callL: turn(180, callR), callU: turn(-90, callR),
  callLR: p("M6.500 2.500h7v6h1V7L18 10l-3.500 3v-1.500h-1v6h-7v-6h-1V13L2 10l3.500-3v1.500h1z"),
  callQ: p("M10 2l2.500 2.500H12v2h1.500V8h2v-.5L18 10l-2.500 2.500V12h-2v1.500H12v2h.5L10 18l-2.500-2.500H8v-2H6.500V12h-2v.5L2 10l2.500-2.500V8h2V6.500H8v-2h-.5z"),
  mplus: p("M8 2.500h4V8h5.500v4H12v5.500H8V12H2.500V8H8z"),
  minus: p("M2.500 8.500h15v3h-15z"),
  times: turn(45, p("M8 1.500h4V8h6.500v4H12v6.500H8V12H1.500V8H8z")),
  divide: p("M2.500 8.500h15v3h-15z") + '<circle cx="10" cy="4.500" r="1.500"/><circle cx="10" cy="15.500" r="1.500"/>',
  equal: p("M2.500 4.500h15v4h-15zM2.500 11.500h15v4h-15z"),
  notequal: p("M2.500 4.500h15v4h-15zM2.500 11.500h15v4h-15zM3.500 16L14 2.500l3 2L6.500 18z"),
  fdecision: p("M10 5l7.500 5-7.500 5-7.500-5z"),
  predef: p("M2.500 2.500h15v15h-15zM5.500 2.500v15M14.500 2.500v15"),
  internal: p("M2.500 2.500h15v15h-15zM5.500 2.500v15M2.500 5.500h15"),
  document: p("M2.500 2.500h15v11.500C12 13.500 9.500 20 2.500 15.500z"),
  multidoc: p("M6.500 2.500h11v9h-11z") + p("M4.500 4.500h11v9h-11z") + p("M2.500 6.500h11v8C9 13.500 7 18.500 2.500 16z"),
  terminator: '<rect x="2.500" y="5.500" width="15" height="9" rx="4.500"/>',
  prep: p("M6 5.500h8l3.500 4.500-3.500 4.500H6L2.500 10z"),
  manual: p("M2.500 8.500l15-4v11h-15z"),
  manualop: p("M2.500 4.500h15l-4 12h-7z"),
  circle: circle(7.5),
  offpage: p("M4.500 3.500h11v9.500L10 17.500 4.500 13z"),
  card: p("M2.500 8.500l5-5h10v14h-15z"),
  tape: p("M2.500 4C5.500 6.500 8.500 6.500 11 5C13 3 15 3 17.500 4v11C15 13 12 13.500 10 15.500C8 17.500 5 17.500 2.500 16z"),
  sumj: circle(7.5) + o("M4.700 4.700l10.600 10.600M15.300 4.700L4.700 15.300"),
  orj: circle(7.5) + o("M10 2.500v15M2.500 10h15"),
  collate: p("M4.500 2.500h11l-11 15h11z"),
  sort: p("M10 2.500l5.500 7.500-5.500 7.500L4.500 10zM4.500 10h11"),
  merge: p("M2.500 3.500h15L10 17.500z"),
  stored: p("M7 3.500h10.500c-3.500 3.500-3.500 9.500 0 13H7C1 16.500 1 3.500 7 3.500z"),
  delay: p("M2.500 2.500H10c10 0 10 15 0 15H2.500z"),
  seq: p("M17.500 17.500H10A7.500 7.500 0 1 1 16 14.500L15 16h2.500z"),
  disk: p("M2.500 7C2.500 4 17.500 4 17.500 7v6.500c0 3-15 3-15 0z") + o("M2.500 7c0 3 15 3 15 0"),
  direct: p("M7 2.500h6.500c4 0 4 15 0 15H7c-4 0-4-15 0-15z") + o("M13.500 2.500c-4 0-4 15 0 15"),
  display: p("M2.500 10L7 2.500h5.500c6.500 3 6.500 12 0 15H7z"),
  exp1: p("M10 6l2.500-4 .5 4.500 4-1.500-2.500 3.500L18 10l-3.500 1.500 2 4-3.500-2V18l-2.500-3.500L8 17.500l-.5-4-4 2.500L6 11.500 2 10.500l3.500-2L3 5l4.500 1.500L8 3z"),
  exp2: p("M9.500 5.500L12 3l.5 2.500L16 3.500l-1 3.500 3 .5-2.500 2.500L18 12l-3.500.5L15 15l-3-1-1 3-2-2.500L6.500 17.500 6 14l-3.500 1L5 11.500 2 10l3-1.500-2-3 3.500.5L7 3.500z"),
  s4: star(4, 8, 2.5), s5: star(5, 8, 3.4), s6: star(6, 8, 4.5), s7: star(7, 8, 4.6),
  s8: star(8, 8, 6) + num(8), s10: star(10, 8.3, 6.2) + num(10), s12: star(12, 8.6, 6.2) + num(12),
  s16: star(14, 8.8, 6.3) + num(16), s24: star(16, 9, 6.3) + num(24), s32: star(18, 9.2, 6.3) + num(32),
  ribbonU: banner, ribbonD: flip(banner), ribbonCU: wavy, ribbonCD: flip(wavy),
  scrollV: p("M5.500 2.500h10c3 0 2.500 4 0 4h-1v9c0 1.500-1 2-2 2h-8c-2.500 0-2.500-3 0-3h1v-10c0-1.500-.5-2 0-2") + o("M6.500 2.500c2.500 0 2.500 4 0 4M7 6.500h8.500"),
  scrollH: p("M2.500 6.500c0-2 1.500-2 3-2h10c0-3 2.500-2 2 0v9c0 1-1 1.500-2 1.500h-10c0 3-3 3-3 0z") + o("M5.500 15V7.500M2.500 7.500h3M15.500 4.500h2"),
  wave: p("M2.500 4C7 0 12 9 17.500 4v12C12 20 7 11.500 2.500 16z"),
  dwave: p("M2.500 4.500C5 1 7.500 6.500 10 4.500C12.500 1 15 6.500 17.500 3.500v12.500C15 19 12.500 14 10 16C7.500 19 5 14 2.500 17z"),
};

document.querySelectorAll(".gallery").forEach((gallery) => {
  gallery.innerHTML = gallery.dataset.shapes.split(" ").map((entry) => {
    const [id, on] = entry.split(":");
    return `<button class="shape${on ? " on" : ""}" aria-label="${id}"><svg width="20" height="20" viewBox="0 0 20 20">${shapes[id]}</svg></button>`;
  }).join("");
});

document.querySelector(".hnums").innerHTML =
  Array.from({ length: 22 }, (_, i) => `<span>${6 + i * 2}</span>`).join("");
document.querySelector(".vruler").innerHTML =
  [4, 2, "", 2, 4, 6, 8, 10, 12, 14, 16, 18].map((n) => `<div class="vnum"><span>${n}</span></div>`).join("");
```
